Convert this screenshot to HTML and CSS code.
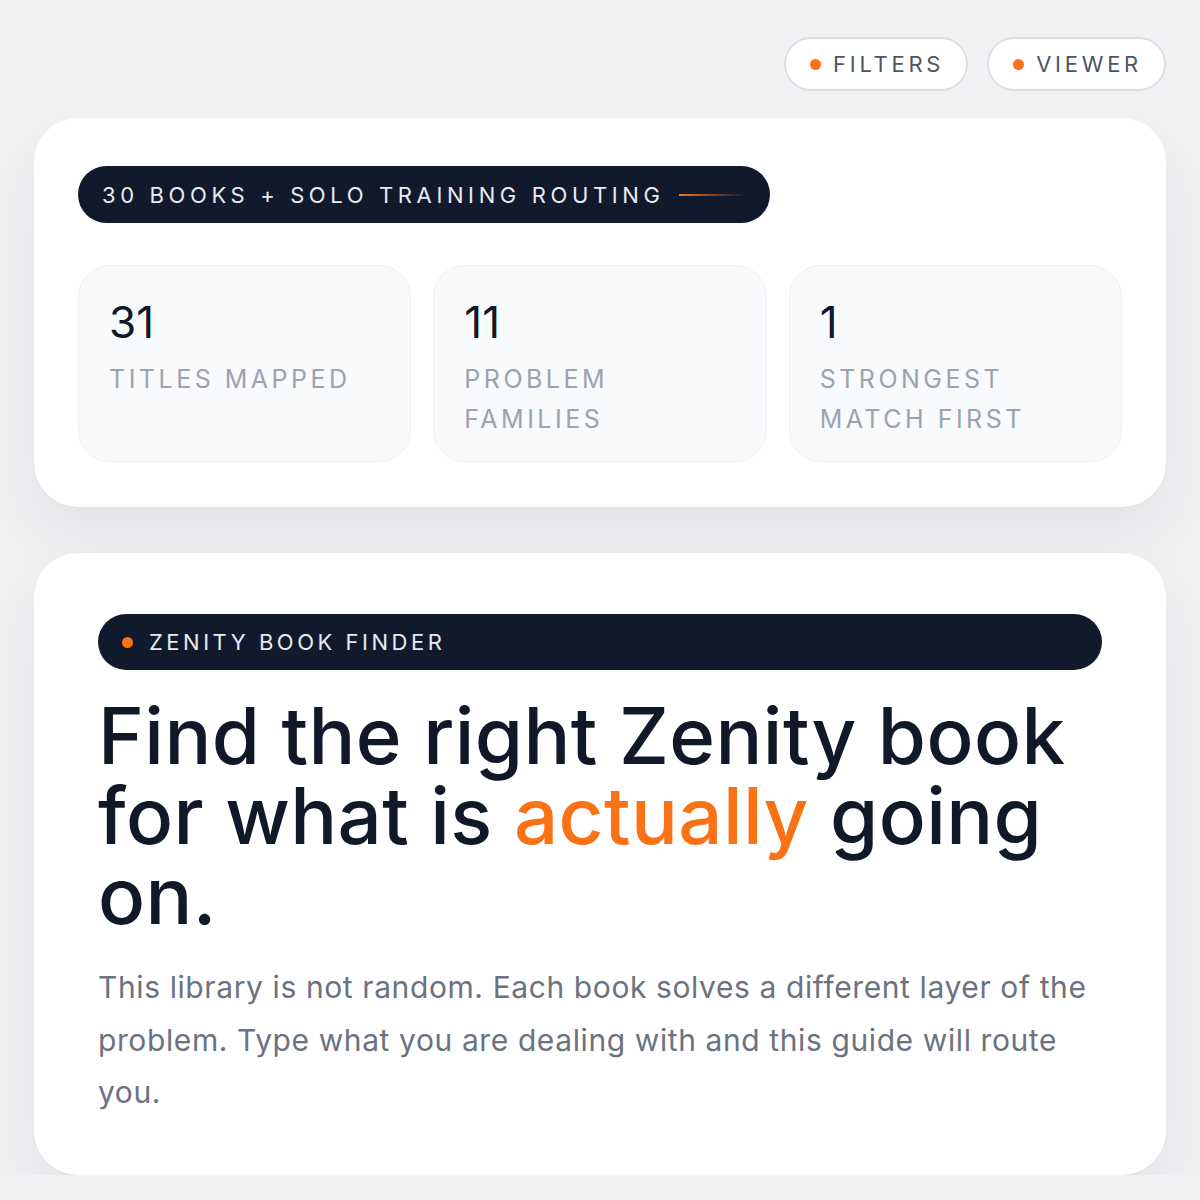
FILE: index.html
```html
<!DOCTYPE html>
<html lang="en">
<head>
<meta charset="utf-8">
<title>Zenity Book Finder</title>
<link rel="stylesheet" href="styles.css">
</head>
<body>
<div class="page">
  <header class="topbar">
    <button class="pill"><span class="dot"></span>FILTERS</button>
    <button class="pill"><span class="dot"></span>VIEWER</button>
  </header>

  <section class="card card-stats">
    <div class="badge badge-routing">
      <span class="badge-text">30 BOOKS + SOLO TRAINING ROUTING</span>
      <span class="badge-line"></span>
    </div>
    <div class="stats">
      <div class="stat">
        <div class="stat-num">31</div>
        <div class="stat-label">TITLES MAPPED</div>
      </div>
      <div class="stat">
        <div class="stat-num">11</div>
        <div class="stat-label">PROBLEM<br>FAMILIES</div>
      </div>
      <div class="stat">
        <div class="stat-num">1</div>
        <div class="stat-label">STRONGEST<br>MATCH FIRST</div>
      </div>
    </div>
  </section>

  <section class="card card-hero">
    <div class="badge badge-finder">
      <span class="dot"></span>
      <span class="badge-text">ZENITY BOOK FINDER</span>
    </div>
    <h1 class="hero-title">Find the right Zenity book for what is <span class="accent">actually</span> going on.</h1>
    <p class="hero-text">This library is not random. Each book solves a different layer of the problem. Type what you are dealing with and this guide will route you.</p>
  </section>
</div>
</body>
</html>
```

FILE: styles.css
```css
* { box-sizing: border-box; }
html, body { margin: 0; padding: 0; }
body {
  background: #f1f2f4;
  font-family: Inter, "Noto Sans", "Liberation Sans", sans-serif;
  color: #0f172a;
}
.page {
  padding: 37px 34px 0 34px;
}
.topbar {
  display: flex;
  justify-content: flex-end;
  gap: 19px;
}
.pill {
  display: flex;
  align-items: center;
  gap: 12px;
  height: 54px;
  margin: 0;
  padding: 0 22px 0 24px;
  background: #ffffff;
  border: 2px solid #dcdfe4;
  border-radius: 999px;
  font-family: Inter, "Noto Sans", sans-serif;
  font-size: 22px;
  letter-spacing: 0.17em;
  color: #4b5563;
  font-weight: 400;
}
.dot {
  width: 11px;
  height: 11px;
  border-radius: 50%;
  background: #f97316;
  flex: none;
}
.card {
  background: #ffffff;
  border-radius: 44px;
  box-shadow: 0 30px 60px rgba(15, 23, 42, 0.07), 0 1px 2px rgba(15, 23, 42, 0.04);
}
.card-stats {
  margin-top: 27px;
  padding: 48px 44px 45px 44px;
}
.badge {
  display: flex;
  align-items: center;
  background: #111a2c;
  border-radius: 999px;
  color: #e8ebf0;
  white-space: nowrap;
}
.badge-routing {
  display: inline-flex;
  height: 57px;
  padding: 0 27px 0 24px;
  gap: 15px;
}
.badge-routing .badge-text {
  font-size: 22px;
  letter-spacing: 0.21em;
}
.badge-line {
  width: 64px;
  height: 2px;
  background: linear-gradient(90deg, #f97316, rgba(249, 115, 22, 0.05));
}
.stats {
  display: grid;
  grid-template-columns: 1fr 1fr 1fr;
  gap: 22px;
  margin-top: 42px;
}
.stat {
  background: #f8fafc;
  border: 1px solid #eef0f3;
  border-radius: 32px;
  padding: 29px 30px 26px 30px;
  height: 197px;
}
.stat-num {
  font-size: 44px;
  line-height: 54px;
  color: #0f172a;
}
.stat-label {
  margin-top: 10px;
  font-size: 25px;
  line-height: 40px;
  letter-spacing: 0.14em;
  color: #9ca3af;
}
.card-hero {
  margin-top: 46px;
  padding: 61px 64px 56px 64px;
}
.badge-finder {
  height: 56px;
  padding: 0 24px;
  gap: 16px;
}
.badge-finder .badge-text {
  font-size: 22px;
  letter-spacing: 0.16em;
}
.hero-title {
  margin: 26px 0 0 0;
  font-size: 78px;
  line-height: 80px;
  font-weight: 500;
  letter-spacing: 0.005em;
  color: #111827;
}
.accent { color: #f97316; }
.hero-text {
  margin: 25px 0 0 0;
  font-size: 30px;
  line-height: 52.5px;
  letter-spacing: 0.02em;
  color: #6b7280;
}
```
